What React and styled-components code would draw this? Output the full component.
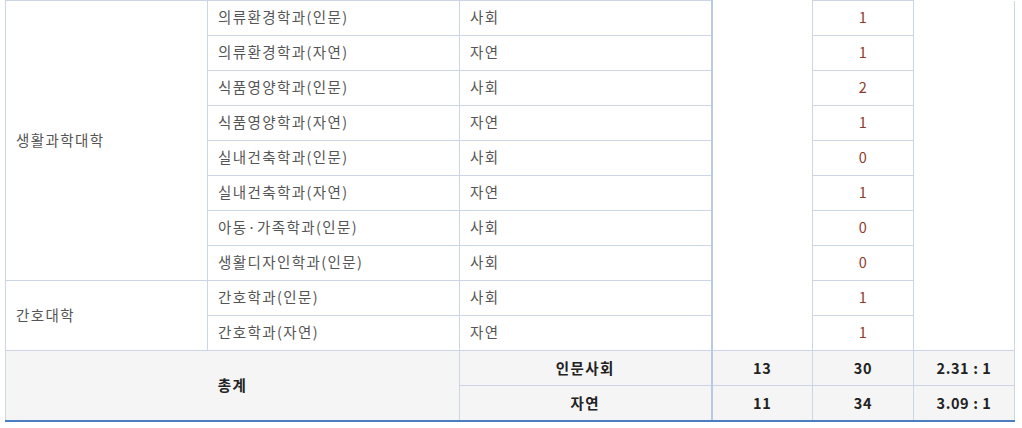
import React from "react";
import styled, { createGlobalStyle } from "styled-components";

const GlobalStyle = createGlobalStyle`
  html, body { margin: 0; padding: 0; background: #fff; }
  body { font-family: "Noto Sans CJK KR", "Noto Sans", sans-serif; }
`;

const Wrapper = styled.div`
  padding: 0 8px 0 5px;
`;

const Table = styled.table`
  border-collapse: collapse;
  table-layout: fixed;
  width: 1009px;
  font-family: "Noto Sans CJK KR", "Noto Sans", sans-serif;
  font-size: 14.5px;
  color: #555;
`;

const Row = styled.tr`
  height: 35px;
`;

const Cell = styled.td`
  border: 1px solid #cbd5e6;
  padding: 0 10px 2px;
  height: 32px;
  line-height: 20px;
  vertical-align: middle;
  letter-spacing: ${(p) => (p.$center ? "0.5px" : "1.4px")};
  text-align: ${(p) => (p.$center ? "center" : "left")};
  color: ${(p) => (p.$red ? "#8c3b2c" : "#555")};
  ${(p) => (p.$open ? "border-top: none;" : "")}
  ${(p) => (p.$thick ? "border-right: 2px solid #b9c9e6;" : "")}
`;

const TotalCell = styled.th`
  border: 1px solid #cbd5e6;
  border-bottom: ${(p) => (p.$last ? "2px solid #4a7ec0" : "1px solid #cbd5e6")};
  ${(p) => (p.$thick ? "border-right: 2px solid #b9c9e6;" : "")}
  background: #f5f5f5;
  color: #222;
  font-weight: 700;
  letter-spacing: ${(p) => (p.$num ? "0.6px" : "1.4px")};
  text-align: center;
  padding: 0 10px 2px;
  height: 32px;
  vertical-align: middle;
`;

const rows = [
  { college: "생활과학대학", span: 8, dept: "의류환경학과(인문)", type: "사회", n: 1 },
  { dept: "의류환경학과(자연)", type: "자연", n: 1 },
  { dept: "식품영양학과(인문)", type: "사회", n: 2 },
  { dept: "식품영양학과(자연)", type: "자연", n: 1 },
  { dept: "실내건축학과(인문)", type: "사회", n: 0 },
  { dept: "실내건축학과(자연)", type: "자연", n: 1 },
  { dept: "아동·가족학과(인문)", type: "사회", n: 0 },
  { dept: "생활디자인학과(인문)", type: "사회", n: 0 },
  { college: "간호대학", span: 2, dept: "간호학과(인문)", type: "사회", n: 1 },
  { dept: "간호학과(자연)", type: "자연", n: 1 },
];

export default function App() {
  return (
    <>
      <GlobalStyle />
      <Wrapper>
        <Table>
          <colgroup>
            <col style={{ width: 202 }} />
            <col style={{ width: 252 }} />
            <col style={{ width: 252 }} />
            <col style={{ width: 101 }} />
            <col style={{ width: 101 }} />
            <col style={{ width: 101 }} />
          </colgroup>
          <tbody>
            {rows.map((r, i) => (
              <Row key={i}>
                {r.college && <Cell rowSpan={r.span}>{r.college}</Cell>}
                <Cell>{r.dept}</Cell>
                <Cell $thick>{r.type}</Cell>
                {i === 0 && <Cell rowSpan={rows.length} $open />}
                <Cell $center $red>{r.n}</Cell>
                {i === 0 && <Cell rowSpan={rows.length} $open />}
              </Row>
            ))}
            <Row>
              <TotalCell colSpan={2} rowSpan={2} $last>총계</TotalCell>
              <TotalCell $thick>인문사회</TotalCell>
              <TotalCell $num>13</TotalCell>
              <TotalCell $num>30</TotalCell>
              <TotalCell $num>2.31 : 1</TotalCell>
            </Row>
            <Row>
              <TotalCell $thick $last>자연</TotalCell>
              <TotalCell $num $last>11</TotalCell>
              <TotalCell $num $last>34</TotalCell>
              <TotalCell $num $last>3.09 : 1</TotalCell>
            </Row>
          </tbody>
        </Table>
      </Wrapper>
    </>
  );
}
